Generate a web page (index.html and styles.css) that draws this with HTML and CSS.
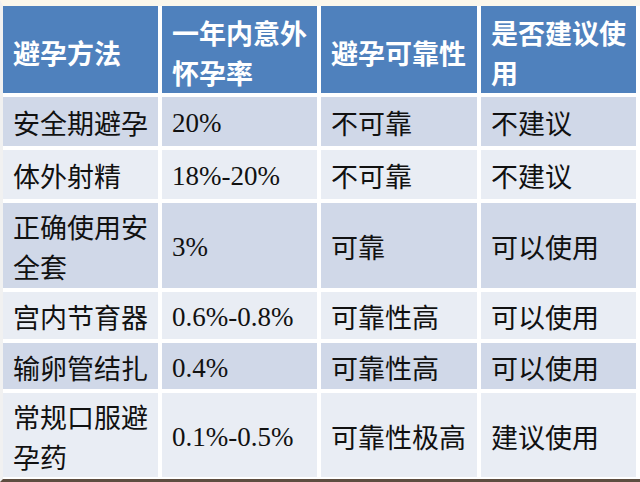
FILE: index.html
```html
<!DOCTYPE html>
<html lang="zh-CN">
<head>
<meta charset="utf-8">
<title>避孕方法</title>
<link rel="stylesheet" href="styles.css">
</head>
<body>
<div class="page">
  <div class="grid">
    <div class="cell head"><span>避孕方法</span></div>
    <div class="cell head"><span>一年内意外<br>怀孕率</span></div>
    <div class="cell head"><span>避孕可靠性</span></div>
    <div class="cell head"><span>是否建议使<br>用</span></div>

    <div class="cell b1">安全期避孕</div>
    <div class="cell b1 num">20%</div>
    <div class="cell b1">不可靠</div>
    <div class="cell b1">不建议</div>

    <div class="cell b2">体外射精</div>
    <div class="cell b2 num">18%-20%</div>
    <div class="cell b2">不可靠</div>
    <div class="cell b2">不建议</div>

    <div class="cell b1">正确使用安<br>全套</div>
    <div class="cell b1 num">3%</div>
    <div class="cell b1">可靠</div>
    <div class="cell b1">可以使用</div>

    <div class="cell b2">宫内节育器</div>
    <div class="cell b2 num">0.6%-0.8%</div>
    <div class="cell b2">可靠性高</div>
    <div class="cell b2">可以使用</div>

    <div class="cell b1">输卵管结扎</div>
    <div class="cell b1 num">0.4%</div>
    <div class="cell b1">可靠性高</div>
    <div class="cell b1">可以使用</div>

    <div class="cell b2">常规口服避<br>孕药</div>
    <div class="cell b2 num">0.1%-0.5%</div>
    <div class="cell b2">可靠性极高</div>
    <div class="cell b2">建议使用</div>
  </div>
</div>
</body>
</html>
```
FILE: styles.css
```css
html, body {
  margin: 0;
  padding: 0;
  background: #ffffff;
}
.page {
  box-sizing: border-box;
  width: 640px;
  height: 482px;
  border-top: 6px solid #fbf7ec;
  border-bottom: 3px solid #5d4d40;
  border-left: 3px solid #f1f1f1;
  background: #ffffff;
  overflow: hidden;
}
.grid {
  display: grid;
  grid-template-columns: 155px 155px 156px 155px;
  grid-template-rows: 87px 49px 49px 85px 47px 46px 84px;
  column-gap: 4px;
  row-gap: 4px;
}
.cell {
  display: flex;
  align-items: center;
  box-sizing: border-box;
  padding: 3px 0 0 10px;
  font-family: "Noto Sans CJK SC", "Noto Sans", sans-serif;
  font-size: 27px;
  line-height: 40px;
  color: #111111;
  white-space: nowrap;
}
.head {
  background: #4f81bd;
  color: #ffffff;
  font-weight: bold;
  padding-top: 7px;
}
.b1 {
  background: #d0d8e8;
}
.b2 {
  background: #e9edf4;
}
.num {
  font-family: "Liberation Serif", "Times New Roman", serif;
  font-size: 27px;
}
```
